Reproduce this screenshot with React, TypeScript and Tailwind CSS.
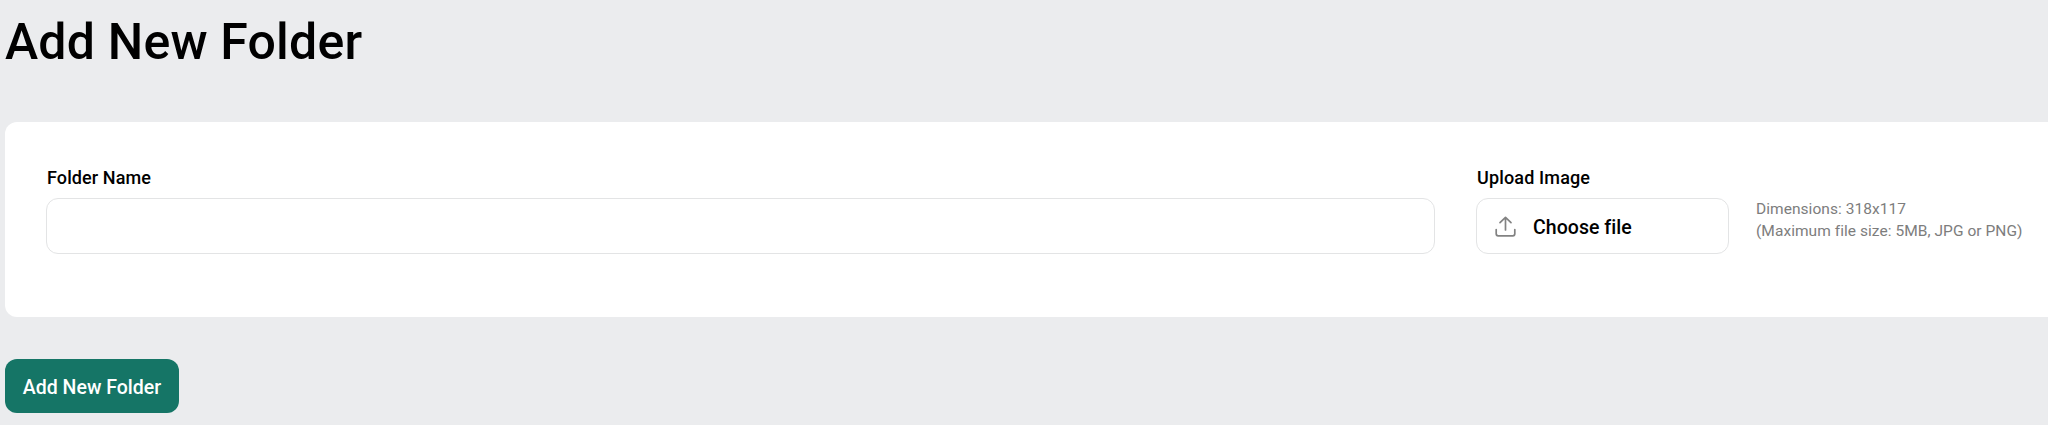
import { useState } from "react";

function UploadIcon() {
  return (
    <svg
      className="h-[21px] w-[21px] flex-shrink-0 text-[#828282]"
      viewBox="0 0 21 21"
      fill="none"
      stroke="currentColor"
      strokeWidth="1.7"
      strokeLinecap="round"
      strokeLinejoin="round"
    >
      <path d="M10.5 14V1.5M5 6.7l5.5-5.4L16 6.7" />
      <path d="M1.2 13.5v4.3a2 2 0 0 0 2 2h14.6a2 2 0 0 0 2-2v-4.3" />
    </svg>
  );
}

export default function App() {
  const [name, setName] = useState("");

  return (
    <main className="h-[425px] w-full overflow-hidden bg-[#ebecee] pl-[5px] font-[Roboto,sans-serif] font-medium text-black">
      <h1 className="pt-3 text-[50px] leading-[60px] tracking-[0.2px]">Add New Folder</h1>

      {/* form card */}
      <section className="mt-[50px] flex h-[195px] rounded-l-xl bg-white pt-11 pl-[41px]">
        <div className="w-[1389px]">
          <label htmlFor="name" className="block pl-px text-lg leading-6 tracking-[0.1px]">
            Folder Name
          </label>
          <input
            id="name"
            value={name}
            onChange={(e) => setName(e.target.value)}
            className="mt-2 block h-14 w-full rounded-xl border border-[#e3e4e5] bg-white px-4 text-xl outline-none"
          />
        </div>

        <div className="ml-[41px]">
          <span className="block pl-px text-lg leading-6 tracking-[0.15px]">Upload Image</span>
          <div className="mt-2 flex">
            <label className="flex h-14 w-[253px] cursor-pointer items-center rounded-xl border border-[#e3e4e5] pl-[18px] text-[19.5px]">
              <UploadIcon />
              <span className="mt-[3px] ml-[17px] tracking-[0.05px]">Choose file</span>
              <input type="file" accept="image/png,image/jpeg" className="hidden" />
            </label>
            <p className="ml-[27px] text-[15.5px] leading-[22px] font-normal tracking-[0.05px] whitespace-nowrap text-[#7d7d7d]">
              Dimensions: 318x117
              <br />
              (Maximum file size: 5MB, JPG or PNG)
            </p>
          </div>
        </div>
      </section>

      <button className="mt-[42px] h-[54px] w-[174px] rounded-xl bg-[#157566] pt-[3px] text-[19.5px] text-white">
        Add New Folder
      </button>
    </main>
  );
}
